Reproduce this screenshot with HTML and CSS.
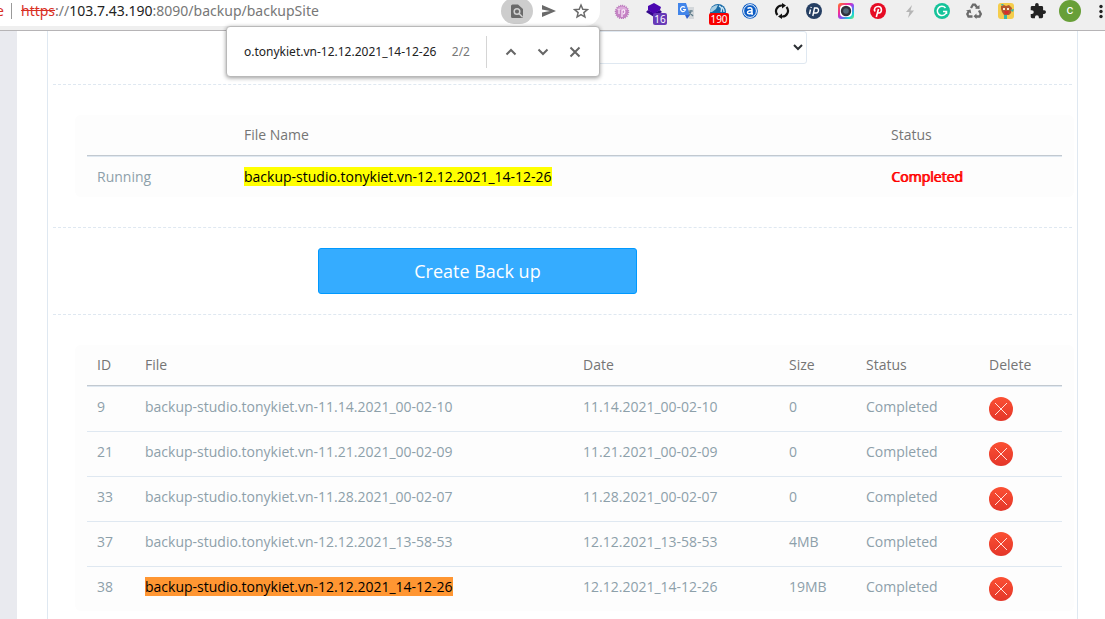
FILE: index.html
```html
<!DOCTYPE html>
<html lang="en">
<head>
<meta charset="utf-8">
<title>Backup Site</title>
<link rel="stylesheet" href="styles.css">
</head>
<body>
<svg class="defs" width="0" height="0" aria-hidden="true">
  <defs>
    <linearGradient id="red" x1="0" y1="0" x2="0" y2="1"><stop offset="0" stop-color="#fb5033"/><stop offset="1" stop-color="#e43629"/></linearGradient>
    <linearGradient id="rainbow" x1="0" y1="0" x2="1" y2="1"><stop offset="0" stop-color="#ff7a1f"/><stop offset=".35" stop-color="#f12aa0"/><stop offset=".55" stop-color="#8a4cf5"/><stop offset=".8" stop-color="#16d4d8"/><stop offset="1" stop-color="#7be86a"/></linearGradient>
    <symbol id="delete" viewBox="0 0 24 24"><circle cx="12" cy="12" r="12" fill="url(#red)"/><path d="M6 6l12 12M18 6L6 18" stroke="#ffe3dd" stroke-width="1" fill="none"/></symbol>
  </defs>
</svg>
<header class="toolbar">
  <div class="omnibox">
    <span class="warn">e</span><span class="bar"></span>
    <div class="url"><span class="scheme">https</span>://<span class="host">103.7.43.190</span>:8090/backup/backupSite</div>
    <button class="act on" aria-label="Find in page"><svg width="14" height="16" viewBox="0 0 14 16"><path fill="#6a6a6a" d="M2.500 1.500H8L13 6v7.500a1.500 1.500 0 0 1-1.500 1.500h-9A1.500 1.500 0 0 1 1 13.500V3a1.500 1.500 0 0 1 1.500-1.500z"/><circle cx="7" cy="8.500" r="2.800" fill="none" stroke="#d0d0d0" stroke-width="1.500"/><path d="M9 10.500l3.500 3.500" stroke="#d0d0d0" stroke-width="1.500"/></svg></button>
    <button class="act" aria-label="Send"><svg width="16" height="14" viewBox="0 0 16 14"><path fill="#6a6a6a" d="M1 1l14 6-14 6V8.500L9 7 1 5.500z"/></svg></button>
    <button class="act" aria-label="Bookmark"><svg width="16" height="16" viewBox="0 0 24 24"><path fill="none" stroke="#6a6a6a" stroke-width="2.200" d="M12 3l2.700 6.300 6.800.6-5.200 4.500 1.600 6.700-5.900-3.600-5.900 3.600 1.600-6.700L2.500 9.900l6.800-.6z"/></svg></button>
  </div>
  <div class="exts">
    <button class="ext" aria-label="Extension"><svg width="16" height="16" viewBox="0 0 16 16"><circle cx="8" cy="9" r="6.500" fill="#c583c4"/><circle cx="8" cy="9" r="6.500" fill="none" stroke="#b978bb" stroke-width="1.500" stroke-dasharray="1 1"/><path d="M2.500 7a6 6 0 0 1 11 0z" fill="#dcaadb"/><path d="M5 6v5M8 14V7.500c3-2.500 4 3 1 3.500" fill="none" stroke="#fbeafb" stroke-width="1.200"/></svg></button>
    <button class="ext" aria-label="Layers, 16"><svg width="16" height="18" viewBox="0 0 16 18"><path fill="#32078a" d="M0 10l2-2 6 3 6-3 2 2-8 5z"/><path fill="#4b07b0" d="M8 1l7 4-1 3-6 4-6-4V4z"/></svg><span class="badge violet">16</span></button>
    <button class="ext" aria-label="Translate"><svg width="16" height="18" viewBox="0 0 16 18"><path fill="#d3d7da" d="M6 5h10v12h-5z"/><path fill="#4285ea" d="M0 1h8l4 12H0z"/><path fill="#2f62d0" d="M7 13h5l-3 4z"/><path d="M7 5.500a2.500 2.500 0 1 0 .5 2H5" fill="none" stroke="#fff" stroke-width="1.200"/><path d="M10.500 9H15M13 8v1c0 2-1 3-2 4m0-3l4 4" stroke="#607d8b" fill="none" stroke-width="1.200"/></svg></button>
    <button class="ext" aria-label="Rank, 190"><svg width="16" height="16" viewBox="0 0 16 16"><circle cx="8" cy="9" r="8" fill="#1769a6"/><path d="M0 9c0-4 4-7 8-7l-2 4-4 3z" fill="#a9cfe4"/><path d="M9 3c3 1 3 3 2 6M12 4c2 2 2 4 2 5" stroke="#c9e4f4" stroke-width="1.500" fill="none"/></svg><span class="badge red">190</span></button>
    <button class="ext" aria-label="Extension"><svg width="16" height="16" viewBox="0 0 16 16"><circle cx="8" cy="8" r="7.800" fill="#0c5cc5"/><circle cx="8" cy="8" r="6.400" fill="none" stroke="#fff"/><path d="M5.500 5.500c1.500-1.300 4.500-1 4.500 1V11h1M10 7.500c-3 0-4.500.5-4.500 2s3 2 4.500 0" fill="none" stroke="#fff" stroke-width="1.500"/></svg></button>
    <button class="ext" aria-label="Refresh"><svg width="16" height="16" viewBox="0 0 16 16"><path d="M8 2.500A5.700 5.700 0 0 0 3.500 12M8 13.500A5.700 5.700 0 0 0 12.500 4" fill="none" stroke="#111" stroke-width="2.200"/><path fill="#111" d="M8 0l4 2.500L8 5.500zM8 10.500v5.500l-4-2.500z"/></svg></button>
    <button class="ext" aria-label="IP"><svg width="16" height="16" viewBox="0 0 16 16"><circle cx="8" cy="8" r="8" fill="#263f63"/><path d="M4.500 6.500L3.500 11M5.200 3.800l-.2 1M6.800 13L8.500 5h2c3 0 2.500 5-.5 5H8" fill="none" stroke="#fff" stroke-width="1.400"/></svg></button>
    <button class="ext" aria-label="Camera"><svg width="16" height="16" viewBox="0 0 16 16"><rect width="16" height="16" rx="3" fill="url(#rainbow)"/><rect x="2" y="2" width="12" height="12" rx="4" fill="#fff"/><circle cx="8" cy="8" r="5.200" fill="#30323c"/><circle cx="8" cy="8" r="2.800" fill="#536879"/></svg></button>
    <button class="ext" aria-label="Pinterest"><svg width="16" height="16" viewBox="0 0 16 16"><circle cx="8" cy="8" r="8" fill="#e60b24"/><path d="M5 8.500C3.500 5.500 5.500 3.500 8.200 3.500c4.300 0 4 6.500.8 6.500-1 0-1.500-.7-1.600-1.200M8.500 6L6.300 14" fill="none" stroke="#fff" stroke-width="1.600"/></svg></button>
    <button class="ext" aria-label="Lightning"><svg width="16" height="16" viewBox="0 0 16 16"><path fill="#b5b5b5" d="M10 2L4 9h3.500L6 15l6-7.500H8.500z"/></svg></button>
    <button class="ext" aria-label="Grammar"><svg width="16" height="16" viewBox="0 0 16 16"><circle cx="8" cy="8" r="8" fill="#15c39a"/><path d="M11.500 5A4.600 4.600 0 1 0 12.500 8.500H9M12.500 8.500V11" fill="none" stroke="#fff" stroke-width="1.500"/></svg></button>
    <button class="ext" aria-label="Recycle"><svg width="16" height="16" viewBox="0 0 16 16"><path d="M5 5l2-3.300h2L11.500 5M13 7.500l1.800 3.500-1.300 2.500H9.500M6.500 13.500H2.500L1.300 11 3 8" fill="none" stroke="#6b6b6b" stroke-width="2.300"/><path fill="#6b6b6b" d="M9 5.500l4.500.5V2zM10.500 10.500v5.500L7.500 13.200zM0 7.500l4.500-1 .8 4z"/></svg></button>
    <button class="ext" aria-label="Dragon"><svg width="16" height="16" viewBox="0 0 16 16"><rect width="16" height="16" rx="3" fill="#f5cd4c"/><path fill="#b4582d" d="M3 6l0-3 3-1 2 1 3-1 3 3-1 5-2 2H6L4 9z"/><path fill="#39b6a8" d="M3 1h3L4 3zM12 7l4-1-1 3zM6 12h3v4H6z"/><path fill="#f8ead0" d="M5 5h2v2H5zM9 5h2v2H9z"/><path fill="#d82d2d" d="M6 8h5l-1 3H7z"/></svg></button>
    <button class="ext" aria-label="Extensions"><svg width="16" height="16" viewBox="1 1 22 22"><path fill="#222" d="M20.500 11H19V7a2 2 0 0 0-2-2h-4V3.500a2.500 2.500 0 0 0-5 0V5H4a2 2 0 0 0-2 2v3.800h1.500a2.700 2.700 0 0 1 0 5.400H2V20a2 2 0 0 0 2 2h3.800v-1.500a2.700 2.700 0 0 1 5.400 0V22H17a2 2 0 0 0 2-2v-4h1.500a2.500 2.500 0 0 0 0-5z"/></svg></button>
    <button class="ext" aria-label="Profile"><span class="avatar">c</span></button>
    <button class="more" aria-label="Menu"><svg width="8" height="16" viewBox="0 0 8 16"><g fill="#222"><circle cx="4" cy="3.500" r="1.700"/><circle cx="4" cy="8.500" r="1.700"/><circle cx="4" cy="13.500" r="1.700"/></g></svg></button>
  </div>
  <form class="find">
    <input type="text" aria-label="Find" value="o.tonykiet.vn-12.12.2021_14-12-26">
    <span class="count">2/2</span>
    <button type="button" aria-label="Previous"><svg width="12" height="12" viewBox="0 0 12 12"><path d="M1.500 8.500L6 4l4.500 4.500"/></svg></button>
    <button type="button" aria-label="Next"><svg width="12" height="12" viewBox="0 0 12 12"><path d="M1.500 3.500L6 8l4.500-4.500"/></svg></button>
    <button type="button" aria-label="Close"><svg width="12" height="12" viewBox="0 0 12 12"><path d="M1.500 1.500l9 9M10.500 1.500l-9 9"/></svg></button>
  </form>
</header>
<div class="page">
  <aside class="side"></aside>
  <main class="main">
    <div class="panel">
      <section class="row pick"><select aria-label="Website"><option></option></select></section>
      <section class="row wide">
        <div class="box">
          <table>
            <colgroup><col class="c-state"><col><col class="c-result"></colgroup>
            <thead><tr><th></th><th>File Name</th><th>Status</th></tr></thead>
            <tbody><tr><td>Running</td><td><mark>backup-studio.tonykiet.vn-12.12.2021_14-12-26</mark></td><td class="done">Completed</td></tr></tbody>
          </table>
        </div>
      </section>
      <section class="row create"><button>Create Back up</button></section>
      <section class="row wide last">
        <div class="box">
          <table>
            <colgroup><col class="c-id"><col><col class="c-date"><col class="c-size"><col class="c-status"><col class="c-delete"></colgroup>
            <thead><tr><th>ID</th><th>File</th><th>Date</th><th>Size</th><th>Status</th><th>Delete</th></tr></thead>
            <tbody>
              <tr><td>9</td><td>backup-studio.tonykiet.vn-11.14.2021_00-02-10</td><td>11.14.2021_00-02-10</td><td>0</td><td>Completed</td><td><button class="del" aria-label="Delete 9"><svg width="24" height="24"><use href="#delete"/></svg></button></td></tr>
              <tr><td>21</td><td>backup-studio.tonykiet.vn-11.21.2021_00-02-09</td><td>11.21.2021_00-02-09</td><td>0</td><td>Completed</td><td><button class="del" aria-label="Delete 21"><svg width="24" height="24"><use href="#delete"/></svg></button></td></tr>
              <tr><td>33</td><td>backup-studio.tonykiet.vn-11.28.2021_00-02-07</td><td>11.28.2021_00-02-07</td><td>0</td><td>Completed</td><td><button class="del" aria-label="Delete 33"><svg width="24" height="24"><use href="#delete"/></svg></button></td></tr>
              <tr><td>37</td><td>backup-studio.tonykiet.vn-12.12.2021_13-58-53</td><td>12.12.2021_13-58-53</td><td>4MB</td><td>Completed</td><td><button class="del" aria-label="Delete 37"><svg width="24" height="24"><use href="#delete"/></svg></button></td></tr>
              <tr><td>38</td><td><mark class="current">backup-studio.tonykiet.vn-12.12.2021_14-12-26</mark></td><td>12.12.2021_14-12-26</td><td>19MB</td><td>Completed</td><td><button class="del" aria-label="Delete 38"><svg width="24" height="24"><use href="#delete"/></svg></button></td></tr>
            </tbody>
          </table>
        </div>
      </section>
    </div>
  </main>
</div>
</body>
</html>
```
FILE: styles.css
```css
* { box-sizing: border-box; }
body {
  margin: 0;
  min-height: 100vh;
  display: flex;
  flex-direction: column;
  background: #fff;
  color: #8da0aa;
  font: 14px/20px "Open Sans", "Noto Sans", sans-serif;
}
button { border: 0; padding: 0; background: none; font: inherit; }
svg { display: block; }
.defs { position: absolute; }

/* browser bar */
.toolbar {
  position: relative;
  display: flex;
  align-items: flex-start;
  height: 31px;
  background: #efefef;
  border-bottom: 1px solid #b6b4b6;
  font-family: "Noto Sans", sans-serif;
}
.omnibox {
  flex: 1;
  display: flex;
  align-items: center;
  height: 26px;
  padding: 0 3px 4px 0;
  background: #fff;
  border-radius: 0 0 15px 0;
}
.warn {
  display: flex;
  justify-content: flex-end;
  width: 4px;
  color: #d93025;
}
.bar { width: 1px; height: 16px; margin: 0 9px 0 7px; background: #9a9a9a; }
.url { flex: 1; font-size: 14px; color: #777; white-space: nowrap; }
.scheme { color: #d93025; text-decoration: line-through; }
.host { color: #222; }
.act, .ext {
  position: relative;
  display: flex;
  align-items: center;
  justify-content: center;
  width: 32px;
  height: 22px;
}
.act.on { height: 26px; background: #cdcdcd; border-radius: 14px; }
.exts { display: flex; align-items: center; width: 505px; height: 22px; padding-left: 6px; }
.more { margin-left: auto; }
.badge {
  position: absolute;
  top: 13px;
  color: #fff;
  font-size: 10px;
  line-height: 12px;
  text-align: center;
  border-radius: 2px;
}
.badge.violet { left: 15px; width: 14px; background: #673ab7; }
.badge.red { left: 7px; width: 20px; background: #f80000; }
.avatar {
  width: 22px;
  height: 22px;
  border-radius: 11px;
  background: #689f38;
  color: #fff;
  font: 13px/20px Roboto, sans-serif;
}
.find {
  position: absolute;
  right: 505px;
  top: 26px;
  z-index: 2;
  display: flex;
  align-items: center;
  width: 374px;
  height: 51px;
  padding: 0 8px 0 17px;
  background: #fff;
  border: 1px solid #b9b9b9;
  border-radius: 4px;
  box-shadow: 0 1px 4px #0006;
  font-size: 12px;
}
.find input {
  flex: 1;
  min-width: 0;
  border: 0;
  padding: 0;
  outline: 0;
  color: #222;
  font: inherit;
}
.count { padding: 6px 16px 6px 8px; border-right: 1px solid #d5d5d5; color: #777; }
.find button { display: flex; justify-content: center; width: 32px; }
.find .count + button { margin-left: 8px; }
.find path { fill: none; stroke: #666; stroke-width: 2; }

/* page */
.page { flex: 1; display: flex; }
.side { width: 17px; background: #e9eaef; }
.main { flex: 1; display: flex; padding: 0 27px 0 30px; }
.panel { flex: 1; padding: 0 5px; border: solid #dfe8f1; border-width: 0 1px; }
.row { border-bottom: 1px dashed #dfe8f1; }
.pick { padding: 0 26% 20px 24%; }
.pick select {
  display: block;
  width: 100%;
  height: 33px;
  border: 1px solid #dfe8f1;
  border-radius: 3px;
  background: #fff;
  color: #2b2f33;
}
.wide { padding: 30px 0; }
.last { border: 0; padding-bottom: 8px; }
.create { padding: 20px 0; }
.create button {
  display: block;
  width: 319px;
  height: 46px;
  margin-left: 26%;
  border: 1px solid #0099ff;
  border-radius: 3px;
  background: #35acff;
  color: #fff;
  font-size: 18px;
}
.box { margin: 0 -2px 0 22px; padding: 0 12px; background: #fdfdfd; border-radius: 6px; }
table { width: 100%; table-layout: fixed; border-collapse: separate; border-spacing: 0; }
th, td { padding: 10px; text-align: left; vertical-align: top; white-space: nowrap; }
th { border-bottom: 1px solid #c2c9d0; color: #757575; font-weight: 400; }
td { border-top: 1px solid #dfe8f1; }
.c-state { width: 147px; }
.c-result { width: 181px; }
.c-id { width: 48px; }
.c-date { width: 206px; }
.c-size { width: 77px; }
.c-status { width: 123px; }
.c-delete { width: 83px; }
mark { background: #ff0; color: #000; }
mark.current { background: #ff9632; }
.done { color: red; text-shadow: 1px 0 red; }
.del { display: block; }
```
